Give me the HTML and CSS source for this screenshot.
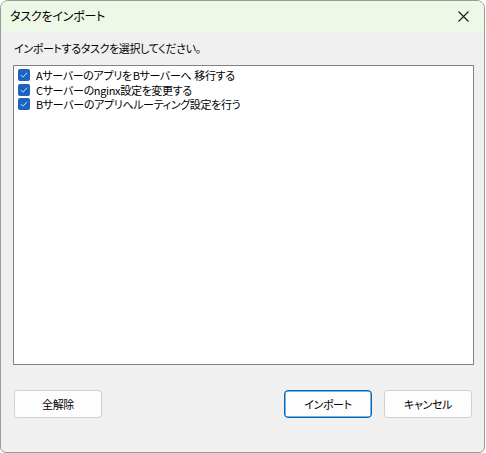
FILE: index.html
```html
<!DOCTYPE html>
<html lang="ja">
<head>
<meta charset="utf-8">
<title>タスクをインポート</title>
<link rel="stylesheet" href="styles.css">
</head>
<body>
<div class="window">
  <div class="titlebar">
    <span class="title">タスクをインポート</span>
    <span class="close">
      <svg width="11" height="11" viewBox="0 0 11 11"><path d="M0.5 0.5 L10.5 10.5 M10.5 0.5 L0.5 10.5" stroke="#1a1a1a" stroke-width="1.1" fill="none"/></svg>
    </span>
  </div>
  <div class="client">
    <div class="prompt">インポートするタスクを選択してください。</div>
    <div class="listbox">
      <div class="item"><span class="check"><svg width="12" height="12" viewBox="0 0 12 12"><path d="M3 6.2 L5 8.2 L9 3.8" stroke="#cfe0f5" stroke-width="1" fill="none"/></svg></span><span class="label">Aサーバーのアプリを<span class="lat">B</span>サーバーへ<span class="gap">移行する</span></span></div>
      <div class="item"><span class="check"><svg width="12" height="12" viewBox="0 0 12 12"><path d="M3 6.2 L5 8.2 L9 3.8" stroke="#cfe0f5" stroke-width="1" fill="none"/></svg></span><span class="label">Cサーバーのnginx設定を変更する</span></div>
      <div class="item"><span class="check"><svg width="12" height="12" viewBox="0 0 12 12"><path d="M3 6.2 L5 8.2 L9 3.8" stroke="#cfe0f5" stroke-width="1" fill="none"/></svg></span><span class="label">Bサーバーのアプリへルーティング設定を行う</span></div>
    </div>
    <div class="buttons">
      <button class="btn">全解除</button>
      <div class="spacer"></div>
      <button class="btn primary">インポート</button>
      <button class="btn">キャンセル</button>
    </div>
  </div>
</div>
</body>
</html>
```
FILE: styles.css
```css
html, body {
  margin: 0;
  padding: 0;
  background: #ffffff;
}
body {
  font-family: "Noto Sans CJK JP", "Noto Sans", sans-serif;
  font-size: 11px;
  letter-spacing: -0.35px;
  font-feature-settings: "palt" 1;
  color: #000;
}
.window {
  width: 485px;
  height: 453px;
  box-sizing: border-box;
  border: 1px solid #9a9a9a;
  border-radius: 8px 8px 6px 6px;
  background: #f0f0f0;
  overflow: hidden;
  display: flex;
  flex-direction: column;
}
.titlebar {
  height: 30px;
  flex: none;
  background: #eef8e6;
  display: flex;
  align-items: center;
  padding: 0 8px 0 9px;
}
.title {
  flex: 1;
  font-size: 12px;
  letter-spacing: -0.2px;
  line-height: 16px;
}
.close {
  display: flex;
  width: 11px;
  height: 11px;
  margin-right: 7px;
}
.client {
  flex: 1;
  display: flex;
  flex-direction: column;
  padding: 9px 10px 0 12px;
}
.prompt {
  line-height: 16px;
  height: 16px;
  padding-left: 1px;
}
.listbox {
  margin-top: 9px;
  height: 300px;
  box-sizing: border-box;
  border: 1px solid #828282;
  background: #ffffff;
  padding: 2px 2px;
}
.item {
  height: 14.5px;
  display: flex;
  align-items: center;
}
.check {
  width: 12px;
  height: 12px;
  border-radius: 2px;
  background: #1b64c0;
  margin-left: 2px;
  margin-right: 6px;
  display: flex;
  flex: none;
}
.label {
  line-height: 14px;
  white-space: nowrap;
}
.lat {
  margin-left: 1px;
}
.gap {
  margin-left: 3px;
}
.buttons {
  margin-top: 25px;
  display: flex;
  padding-left: 1px;
  padding-right: 2px;
  gap: 12px;
}
.spacer {
  flex: 1;
}
.btn {
  width: 88px;
  height: 28px;
  box-sizing: border-box;
  border: 1px solid #d0d0d0;
  border-radius: 4px;
  background: #fdfdfd;
  font-family: inherit;
  font-size: 11px;
  letter-spacing: -0.35px;
  font-feature-settings: "palt" 1;
  color: #000;
  padding: 0;
}
.btn.primary {
  border: 1px solid #0067c0;
  box-shadow: inset 0 0 0 0.5px #0067c0;
}
```
